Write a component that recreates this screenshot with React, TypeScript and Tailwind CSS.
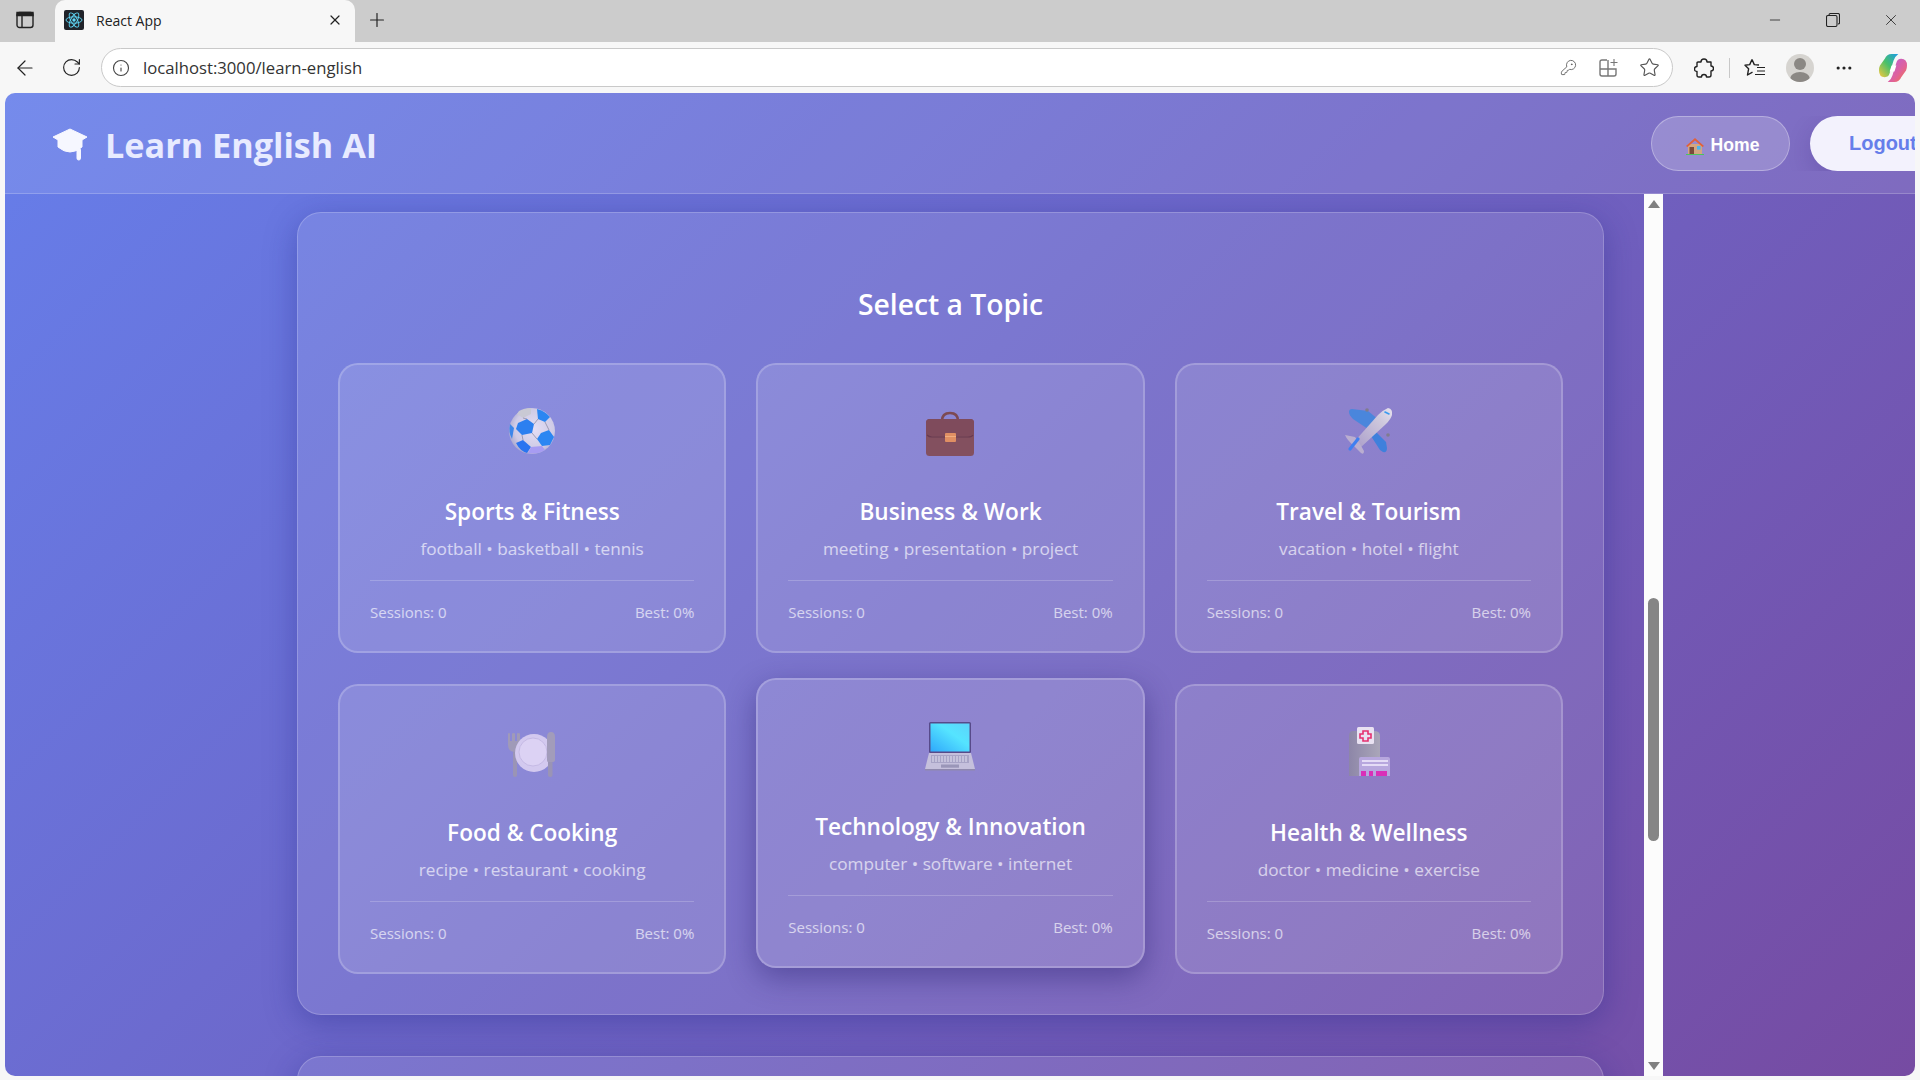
import { ArrowLeft, Info, KeyRound, Minus, MoreHorizontal, Plus, RotateCw, Star, X } from "lucide-react";
import type { ReactNode } from "react";

const segoe = "font-['Open_Sans','Noto_Sans',sans-serif]";

function SoccerIcon() {
  return (
    <svg width="50" height="50" viewBox="0 0 50 50">
      <defs>
        <radialGradient id="ball" cx="0.55" cy="0.45" r="0.6">
          <stop offset="0" stopColor="#e4def5" />
          <stop offset="0.7" stopColor="#cfcbe6" />
          <stop offset="1" stopColor="#a7a5cc" />
        </radialGradient>
      </defs>
      <circle cx="25" cy="25" r="23" fill="url(#ball)" />
      <path d="M12 5 Q17 2 24 2 L24 8 L16 12 L10 8Z" fill="#c9c9d4" />
      <path d="M30 3 Q38 5 43 11 L38 16 L31 13Z" fill="#2b86f2" />
      <path d="M11 17 L20 13 L27 18 L25 27 L15 29 L9 23Z" fill="#2c7ff0" />
      <path d="M34 27 L42 24 L47 31 L43 39 L35 40 L30 33Z" fill="#2b86f2" />
      <path d="M9 37 L16 34 L24 41 L20 47 Q13 45 9 37Z" fill="#2a74f0" />
      <path d="M24 41 L35 40 L38 44 Q30 49 21 47Z" fill="#a79cf2" />
      <path d="M3 18 L7 22 L5 33 Q1 26 3 18Z" fill="#3d86ea" />
      <path d="M27 18 L31 13 M25 27 L30 33 M15 29 L16 34 M20 13 L16 12 M38 16 L42 24" stroke="#75758f" strokeWidth="0.6" />
    </svg>
  );
}

function BriefcaseIcon() {
  return (
    <svg width="50" height="50" viewBox="0 -2 50 50">
      <path d="M17 13 Q17 5 25 5 Q33 5 33 13" fill="none" stroke="#7d4a52" strokeWidth="2.6" />
      <rect x="1" y="11" width="48" height="37" rx="3.5" fill="#83505f" />
      <path d="M1 15 Q1 11 5 11 H45 Q49 11 49 15 V25 Q49 28 44 28 H6 Q1 28 1 25Z" fill="#7f4b5c" />
      <path d="M2 27 Q4 29 7 29 H43 Q47 29 48 27" fill="none" stroke="#693a50" strokeWidth="1.2" />
      <rect x="20" y="25" width="11" height="9" rx="1" fill="#e08f63" />
      <rect x="20" y="28" width="11" height="1" fill="#f0ae80" />
    </svg>
  );
}

function PlaneIcon() {
  return (
    <svg width="50" height="50" viewBox="0 0 50 50">
      <defs>
        <linearGradient id="hull" x1="0" y1="1" x2="1" y2="0">
          <stop offset="0" stopColor="#a99cc9" />
          <stop offset="0.7" stopColor="#cfc9dd" />
          <stop offset="1" stopColor="#e6e1ee" />
        </linearGradient>
      </defs>
      <path d="M8 3 L24 5 L35 14 L27 25 L9 13 Q5 9 5 6 Q5 3 8 3Z" fill="#4a86dc" />
      <path d="M30 24 L42 36 L43 42 Q43 47 39 46 L36 44 L27 30Z" fill="#3f80dc" />
      <circle cx="23" cy="4" r="1.8" fill="#807c8e" />
      <circle cx="44" cy="29" r="1.8" fill="#807c8e" />
      <path d="M44 2 Q49 3 48 9 Q47 13 42 18 L16 42 L10 36 L34 9 Q39 4 44 2Z" fill="url(#hull)" />
      <path d="M1 29 L11 31 L16 38 L20 45 Q20 49 17 47 L10 40 Q3 34 1 29Z" fill="#baaed0" />
      <path d="M6 43 L14 33" stroke="#3f7ff0" strokeWidth="3.2" strokeLinecap="round" />
      <path d="M41 6 L45 8" stroke="#3a9bf0" strokeWidth="1.6" strokeLinecap="round" />
    </svg>
  );
}

function PlateIcon() {
  return (
    <svg width="50" height="50" viewBox="0 -4 50 50">
      <rect x="6" y="20" width="4" height="26" rx="2" fill="#9a94b5" />
      <path d="M1 3 Q1 2 2 2 Q3 2 3 3 V10 H5 V3 Q5 2 6.5 2 Q8 2 8 3 V10 H10 V3 Q10 2 11 2 Q13 2 13 3 V14 Q13 21 8 21 Q1 21 1 14Z" fill="#a09ab8" />
      <circle cx="27" cy="22" r="19" fill="#d3c9ef" />
      <circle cx="26" cy="21" r="14" fill="#dcd2f4" stroke="#bfb4df" strokeWidth="0.8" />
      <rect x="41" y="28" width="4.5" height="18" rx="2" fill="#9a94b5" />
      <path d="M40 6 Q40 1 44 1 Q48 1 48 6 V29 Q48 31 45 31 H41 Q40 31 40 29Z" fill="#a29cba" />
    </svg>
  );
}

function LaptopIcon() {
  return (
    <svg width="50" height="50" viewBox="0 -1 50 50">
      <defs>
        <linearGradient id="screen" x1="0" y1="1" x2="1" y2="0">
          <stop offset="0" stopColor="#2fa8fb" />
          <stop offset="0.6" stopColor="#55e4ff" />
          <stop offset="1" stopColor="#5cd4fb" />
        </linearGradient>
      </defs>
      <rect x="4" y="0" width="42" height="31" rx="1.5" fill="#574a8a" />
      <rect x="5.5" y="1.5" width="39" height="28" fill="url(#screen)" />
      <path d="M4 31 H46 L50 47 H0Z" fill="#c5c0dc" />
      <rect x="6" y="33" width="38" height="8" fill="#a8a4c6" />
      <path d="M7 35 H43 M7 37 H43 M7 39 H43" stroke="#e2e0f0" strokeWidth="1.1" strokeDasharray="2 1" />
      <rect x="16" y="42.5" width="18" height="3.2" fill="#9a96b8" />
      <rect x="0" y="47" width="50" height="1.5" fill="#8f89ad" />
    </svg>
  );
}

function HospitalIcon() {
  return (
    <svg width="50" height="50" viewBox="0 0 50 50">
      <defs>
        <linearGradient id="tower" x1="0" y1="0" x2="1" y2="0">
          <stop offset="0" stopColor="#8d86a8" />
          <stop offset="1" stopColor="#aaa6b9" />
        </linearGradient>
      </defs>
      <path d="M5 9 Q5 4 9 4 H30 Q36 4 36 9 V49 H5Z" fill="url(#tower)" />
      <rect x="13" y="0" width="17" height="17" rx="1.5" fill="#e9e2f2" />
      <path d="M19 4 H24 V7 H27 V11 H24 V14 H19 V11 H16 V7 H19Z" fill="none" stroke="#e5306f" strokeWidth="1.6" />
      <path d="M15 32 Q15 30 17 30 H44 Q46 30 46 32 V49 H15Z" fill="#b7a7de" />
      <path d="M18 34 H44 M18 38 H44" stroke="#e4dcf6" strokeWidth="2" />
      <rect x="17" y="44" width="5" height="5" fill="#d92fb8" />
      <rect x="25" y="44" width="4" height="5" fill="#d92fb8" />
      <rect x="32" y="44" width="11" height="5" fill="#d92fb8" />
    </svg>
  );
}

function HomeEmoji() {
  return (
    <svg width="20" height="18" viewBox="0 0 20 18">
      <rect x="3" y="7" width="14" height="10" fill="#d3a681" />
      <path d="M10 1 L1 9 L2.5 10 L10 3.5 L17.5 10 L19 9Z" fill="#e2603a" />
      <rect x="4.5" y="10" width="4.5" height="7" fill="#7a4a3a" />
      <rect x="12" y="9" width="3.6" height="3.6" fill="#4cb4ee" />
      <rect x="1" y="17" width="18" height="1" fill="#4cc45c" />
    </svg>
  );
}

function CopilotLogo() {
  return (
    <svg width="28" height="28" viewBox="0 0 29 29">
      <defs>
        <linearGradient id="cp1" x1="0" y1="1" x2="1" y2="0">
          <stop offset="0" stopColor="#f6c83c" />
          <stop offset="0.5" stopColor="#49c06a" />
          <stop offset="1" stopColor="#1b9de8" />
        </linearGradient>
        <linearGradient id="cp2" x1="0" y1="0" x2="1" y2="1">
          <stop offset="0" stopColor="#b65ce0" />
          <stop offset="0.6" stopColor="#e0629a" />
          <stop offset="1" stopColor="#f5743c" />
        </linearGradient>
      </defs>
      <path d="M6 5 Q8 0 13 0 H20 Q16 3 15 7 L11 20 Q10 24 6 24 Q0 24 0 17 Q0 14 1 12 Z" fill="url(#cp1)" />
      <path d="M23 24 Q21 29 16 29 H9 Q13 26 14 22 L18 9 Q19 5 23 5 Q29 5 29 12 Q29 15 28 17 Z" fill="url(#cp2)" />
      <path d="M13 12 H18 L16 18 H11Z" fill="#fff" />
    </svg>
  );
}

function ReactFavicon() {
  return (
    <svg width="20" height="20" viewBox="0 0 20 20">
      <rect width="20" height="20" rx="2" fill="#20232a" />
      <circle cx="10" cy="10" r="1.7" fill="#61dafb" />
      <g fill="none" stroke="#61dafb" strokeWidth="0.9">
        <ellipse cx="10" cy="10" rx="8" ry="3.2" />
        <ellipse cx="10" cy="10" rx="8" ry="3.2" transform="rotate(60 10 10)" />
        <ellipse cx="10" cy="10" rx="8" ry="3.2" transform="rotate(120 10 10)" />
      </g>
    </svg>
  );
}

function BrowserChrome() {
  return (
    <>
      {/* Tab strip */}
      <div className="flex h-[42px] items-end bg-[#cccccc]">
        <div className="flex h-[42px] w-[50px] items-center justify-center pb-[2px]">
          <svg width="18" height="18" viewBox="0 0 18 18" fill="none" stroke="#222" strokeWidth="1.4">
            <rect x="1" y="1.5" width="16" height="15" rx="2.5" />
            <path d="M1 4.5 H17 V1.5 H1Z M6 4.5 V16.5" fill="#222" />
          </svg>
        </div>
        <div className="ml-[5px] flex h-[42px] w-[300px] items-center rounded-t-[10px] bg-[#f7f7f7] pb-[2px] pl-[9px] pr-[12px]">
          <ReactFavicon />
          <span className="ml-[12px] flex-1 font-['Open_Sans',sans-serif] text-[14px] text-[#222]">React App</span>
          <X size={16} strokeWidth={1.8} className="text-[#222]" />
        </div>
        <div className="ml-[1px] flex h-[42px] w-[42px] items-center justify-center pb-[2px]">
          <Plus size={22} strokeWidth={1.3} className="text-[#222]" />
        </div>
        <div className="flex-1" />
        <div className="flex h-[42px] items-center pb-[2px] text-[#222]">
          <div className="flex w-[58px] justify-center"><Minus size={16} strokeWidth={1.2} /></div>
          <div className="flex w-[58px] justify-center">
            <svg width="14" height="14" viewBox="0 0 14 14" fill="none" stroke="#222" strokeWidth="1.1">
              <rect x="0.5" y="2.5" width="10.5" height="11" rx="1.5" />
              <path d="M3 2.5 V2 Q3 0.5 4.5 0.5 H12 Q13.5 0.5 13.5 2 V10 Q13.5 11 12 11" />
            </svg>
          </div>
          <div className="flex w-[58px] justify-center"><X size={18} strokeWidth={1.1} /></div>
        </div>
      </div>
      {/* Toolbar */}
      <div className="flex h-[51px] items-center bg-[#f7f7f7] text-[#222]">
        <div className="flex w-[50px] justify-center"><ArrowLeft size={24} strokeWidth={1.2} /></div>
        <div className="flex w-[42px] justify-center"><RotateCw size={21} strokeWidth={1.3} /></div>
        <div className="ml-[9px] flex h-[39px] w-[1572px] items-center rounded-full border border-[#c9c9c9] bg-white pl-[10px] pr-[12px]">
          <Info size={18} strokeWidth={1.5} className="text-[#444]" />
          <span className="ml-[13px] flex-1 font-['Open_Sans',sans-serif] text-[16.7px] text-[#333]">localhost:3000/learn-english</span>
          <KeyRound size={17} strokeWidth={1.2} className="mr-[22px] text-[#555]" />
          <svg width="19" height="19" viewBox="0 0 19 19" fill="none" stroke="#777" strokeWidth="1.4" className="mr-[21px]">
            <path d="M8 2 H3 Q1 2 1 4 V16 Q1 18 3 18 H15 Q17 18 17 16 V11 H1 M9 2 V18" />
            <path d="M15 1 V8 M11.5 4.5 H18.5" strokeWidth="1.1" />
          </svg>
          <Star size={21} strokeWidth={1.3} className="text-[#555]" />
        </div>
        <div className="ml-[14px] flex w-[34px] justify-center">
          <svg width="20" height="20" viewBox="0 0 20 20" fill="none" stroke="#222" strokeWidth="1.4" strokeLinejoin="round">
            <path d="M7 4 Q7 1 10 1 Q13 1 13 4 H17 V8 Q19.5 8 19.5 10.5 Q19.5 13 17 13 V17 Q17 19 15 19 H12.5 Q12.5 16.5 10 16.5 Q7.5 16.5 7.5 19 H5 Q3 19 3 17 V13.5 Q0.5 13.5 0.5 11 Q0.5 8.5 3 8.5 V5 Q3 4 4 4Z" />
          </svg>
        </div>
        <div className="ml-[8px] h-[20px] w-px bg-[#c8c8c8]" />
        <div className="ml-[13px] flex w-[24px] items-center justify-center">
          <svg width="22" height="20" viewBox="0 0 22 20" fill="none" stroke="#222" strokeWidth="1.4" strokeLinejoin="round">
            <path d="M8 1.5 L10.3 6.6 L15 7 M8 1.5 L5.7 6.6 L1 7.2 L4.6 10.8 L3.5 17 L8.5 14.2" />
            <path d="M13 9.5 H21 M13 13 H21 M11 16.5 H21" strokeWidth="1.2" />
          </svg>
        </div>
        <div className="ml-[19px] flex h-[28px] w-[28px] items-end justify-center overflow-hidden rounded-full bg-[#d6d4d0]">
          <svg width="28" height="28" viewBox="0 0 28 28" fill="#8b8884">
            <circle cx="14" cy="10" r="6" />
            <ellipse cx="14" cy="25" rx="10" ry="7" />
          </svg>
        </div>
        <div className="ml-[15px] flex w-[30px] justify-center"><MoreHorizontal size={20} strokeWidth={1.8} /></div>
        <div className="ml-[20px]"><CopilotLogo /></div>
      </div>
    </>
  );
}

type Topic = { title: string; words: string; icon: ReactNode; hovered?: boolean };

const topics: Topic[] = [
  { title: "Sports & Fitness", words: "football • basketball • tennis", icon: <SoccerIcon /> },
  { title: "Business & Work", words: "meeting • presentation • project", icon: <BriefcaseIcon /> },
  { title: "Travel & Tourism", words: "vacation • hotel • flight", icon: <PlaneIcon /> },
  { title: "Food & Cooking", words: "recipe • restaurant • cooking", icon: <PlateIcon /> },
  { title: "Technology & Innovation", words: "computer • software • internet", icon: <LaptopIcon />, hovered: true },
  { title: "Health & Wellness", words: "doctor • medicine • exercise", icon: <HospitalIcon /> },
];

function TopicCard({ topic }: { topic: Topic }) {
  const base = "h-[290px] rounded-[20px] border-2 border-white/20 px-[30px] pt-[41px] text-center";
  return (
    <div className={topic.hovered ? `${base} -translate-y-[6px] bg-white/[0.14] shadow-[0_10px_30px_rgba(40,30,110,0.45)]` : `${base} bg-white/[0.12]`}>
      <div className="flex h-[66px] items-start justify-center">{topic.icon}</div>
      <h3 className="mt-[25px] text-[22.6px] font-semibold leading-[30px] text-white">{topic.title}</h3>
      <p className="mt-[7px] text-[17.2px] leading-[30px] text-white/65">{topic.words}</p>
      <div className="mt-[16px] flex justify-between border-t border-white/20 pt-[16px] text-[15px] leading-[30px] text-white/65">
        <span>Sessions: 0</span>
        <span>Best: 0%</span>
      </div>
    </div>
  );
}

function Scrollbar() {
  return (
    <div className="flex w-[19px] shrink-0 flex-col items-center bg-[#fcfcfc]">
      <div className="mt-[6px] h-0 w-0 border-x-[6px] border-b-[8px] border-x-transparent border-b-[#808080]" />
      <div className="mt-[390px] h-[243px] w-[11px] rounded-full bg-[#858585]" />
      <div className="mt-auto mb-[6px] h-0 w-0 border-x-[6px] border-t-[8px] border-x-transparent border-t-[#808080]" />
    </div>
  );
}

export default function App() {
  return (
    <div className={`flex h-screen w-full flex-col overflow-hidden bg-[#f7f7f7] ${segoe}`}>
      <BrowserChrome />
      <div className="mx-[5px] flex h-[983px] w-[1910px] flex-col overflow-hidden rounded-[10px] bg-[linear-gradient(135deg,#667eea_0%,#764ba2_100%)]">
        {/* App header */}
        <header className="flex h-[101px] shrink-0 items-center justify-between border-b border-white/20 bg-white/10 pl-[47px]">
          <div className="flex items-center">
            <svg width="36" height="33" viewBox="0 0 36 33" fill="#f6f7ff" stroke="#f6f7ff" strokeWidth="1" strokeLinejoin="round" className="mt-[4px]">
              <path d="M18 1 L35 9 L30 12 V19 Q24 24 18 24 Q12 24 6 19 V12 L1 9Z" />
              <rect x="25" y="20" width="3.5" height="12" rx="1.7" />
            </svg>
            <h1 className="ml-[17px] pt-[3px] text-[34.2px] font-bold text-[#e8ebff]">Learn English AI</h1>
          </div>
          <div className="flex w-[264px] shrink-0 items-center gap-[20px] overflow-hidden font-['Liberation_Sans',sans-serif] font-bold">
            <button className="flex h-[55px] w-[139px] shrink-0 items-center justify-center gap-[6px] rounded-full border border-white/30 bg-white/20 pl-[3px] pt-[5px] text-[17.6px] text-white">
              <HomeEmoji />
              Home
            </button>
            <button className="h-[55px] w-[150px] shrink-0 rounded-full bg-[#f3f2fd] pl-[39px] text-left text-[20px] text-[#667eea] shadow-[0_8px_24px_rgba(50,30,120,0.2)]">
              Logout
            </button>
          </div>
        </header>
        {/* Scrolled content */}
        <div className="flex min-h-0 flex-1 justify-center">
          <div className="flex w-[1406px]">
            <main className="flex-1 overflow-hidden px-[40px] pt-[18px]">
              <section className="h-[803px] rounded-[24px] border border-white/20 bg-white/10 px-[40px] pt-[71px] shadow-[0_8px_32px_rgba(31,38,135,0.37)]">
                <h2 className="text-center text-[28.3px] font-semibold leading-[40px] text-white">Select a Topic</h2>
                <div className="mt-[39px] grid grid-cols-3 gap-x-[30px] gap-y-[31px]">
                  {topics.map((topic) => (
                    <TopicCard key={topic.title} topic={topic} />
                  ))}
                </div>
              </section>
              <section className="mt-[41px] h-[200px] rounded-[24px] border border-white/20 bg-white/10 shadow-[0_8px_32px_rgba(31,38,135,0.37)]" />
            </main>
            <Scrollbar />
          </div>
        </div>
      </div>
    </div>
  );
}
